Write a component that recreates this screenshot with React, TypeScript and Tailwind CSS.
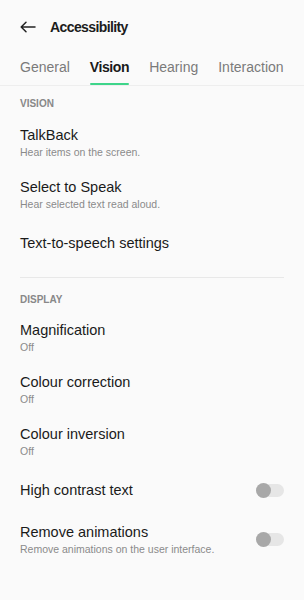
import React from "react";

function Toggle() {
  return (
    <div className="relative w-[28px] h-[15px] shrink-0">
      <div className="absolute inset-y-[1px] left-0 right-0 rounded-full bg-[#e6e6e6]" />
      <div className="absolute left-0 top-0 w-[15px] h-[15px] rounded-full bg-[#a8a8a8]" />
    </div>
  );
}

function Item({ title, sub, toggle, py = "py-[9px]" }: { title: string; sub?: string; toggle?: boolean; py?: string }) {
  return (
    <div className={`flex items-center justify-between ${py}`}>
      <div className="flex flex-col">
        <div className="text-[14.5px] leading-[20px] text-[#1a1a1a]">{title}</div>
        {sub && <div className="text-[10.5px] leading-[14px] text-[#8a8a8a]">{sub}</div>}
      </div>
      {toggle && <Toggle />}
    </div>
  );
}

export default function App() {
  return (
    <div className="w-[304px] h-[600px] bg-[#fafafa] overflow-hidden" style={{ fontFamily: "'Liberation Sans', Arial, sans-serif" }}>
      <div className="h-[54px] flex items-center px-[20px] gap-[14px]">
        <svg width="16" height="12" viewBox="0 0 16 12" fill="none" stroke="#222" strokeWidth="1.5" strokeLinecap="round" strokeLinejoin="round">
          <path d="M15 6H1.5M6 1.2L1.2 6L6 10.8" />
        </svg>
        <div className="text-[14px] font-bold tracking-[-0.6px] text-[#1c1c1c]">Accessibility</div>
      </div>
      <div className="border-b border-[#eeeeee] pt-[3px]">
        <div className="mx-[20px] flex gap-[20px] whitespace-nowrap overflow-hidden">
          <div className="flex flex-col shrink-0">
            <div className="text-[14px] leading-[20px] text-[#7a7a7a]">General</div>
            <div className="h-[2px] mt-[6px]" />
          </div>
          <div className="flex flex-col shrink-0">
            <div className="text-[14px] leading-[20px] text-[#1a1a1a] font-bold tracking-[-0.4px]">Vision</div>
            <div className="h-[2px] mt-[6px] bg-[#3ed58a] rounded-full" />
          </div>
          <div className="flex flex-col shrink-0">
            <div className="text-[14px] leading-[20px] text-[#7a7a7a]">Hearing</div>
            <div className="h-[2px] mt-[6px]" />
          </div>
          <div className="flex flex-col shrink-0">
            <div className="text-[14px] leading-[20px] text-[#7a7a7a]">Interaction</div>
            <div className="h-[2px] mt-[6px]" />
          </div>
        </div>
      </div>
      <div className="px-[20px]">
        <div className="pt-[11px] pb-[5px] text-[10px] leading-[14px] font-bold text-[#888888]">VISION</div>
        <Item title="TalkBack" sub="Hear items on the screen." />
        <Item title="Select to Speak" sub="Hear selected text read aloud." />
        <Item title="Text-to-speech settings" py="py-[13px]" />
        <div className="mt-[11px] h-px bg-[#e8e8e8]" />
        <div className="pt-[15px] pb-[4px] text-[10px] leading-[14px] font-bold text-[#888888]">DISPLAY</div>
        <Item title="Magnification" sub="Off" />
        <Item title="Colour correction" sub="Off" />
        <Item title="Colour inversion" sub="Off" />
        <Item title="High contrast text" toggle py="py-[13px]" />
        <Item title="Remove animations" sub="Remove animations on the user interface." toggle />
      </div>
    </div>
  );
}
